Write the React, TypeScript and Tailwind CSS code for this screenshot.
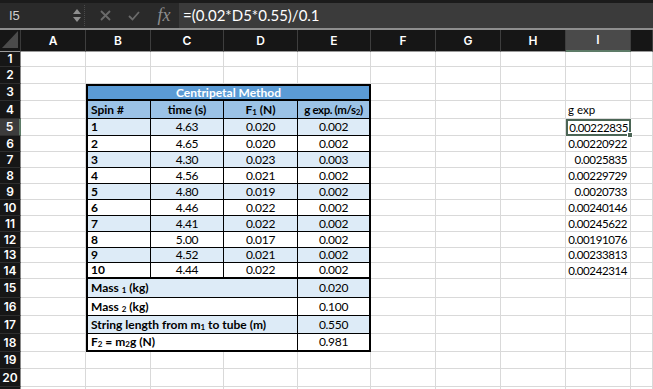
import React from 'react';

const COLS = ['A', 'B', 'C', 'D', 'E', 'F', 'G', 'H', 'I', ''];

const G_EXP = [
  '0.00222835',
  '0.00220922',
  '0.0025835',
  '0.00229729',
  '0.0020733',
  '0.00240146',
  '0.00245622',
  '0.00191076',
  '0.00233813',
  '0.00242314',
];

const SPINS = [
  ['1', '4.63', '0.020', '0.002'],
  ['2', '4.65', '0.020', '0.002'],
  ['3', '4.30', '0.023', '0.003'],
  ['4', '4.56', '0.021', '0.002'],
  ['5', '4.80', '0.019', '0.002'],
  ['6', '4.46', '0.022', '0.002'],
  ['7', '4.41', '0.022', '0.002'],
  ['8', '5.00', '0.017', '0.002'],
  ['9', '4.52', '0.021', '0.002'],
  ['10', '4.44', '0.022', '0.002'],
];

const cellFont = { fontFamily: 'Lato, "Open Sans", sans-serif' };

const FormulaBar: React.FC = () => (
  <div className="flex h-[30px] items-stretch border-t-[3px] border-b-2 border-t-[#1b1b1b] border-b-[#8e8e8e] bg-[#2a2a2a]">
    <div className="flex w-[70px] items-center pl-[9px] text-[13px] text-[#cfcfcf] font-['Liberation_Sans',sans-serif]">
      I5
    </div>
    <div className="flex w-[14px] flex-col items-center justify-center gap-[3px]">
      <svg width="8" height="5" viewBox="0 0 8 5">
        <path d="M4 0 L8 5 L0 5 Z" fill="#8f8f8f" />
      </svg>
      <svg width="8" height="5" viewBox="0 0 8 5">
        <path d="M0 0 L8 0 L4 5 Z" fill="#8f8f8f" />
      </svg>
    </div>
    <div className="my-[2px] w-px border-l border-dotted border-[#4a4a4a]" />
    <div className="flex w-[40px] items-center justify-center">
      <svg width="11" height="11" viewBox="0 0 11 11">
        <path d="M1 1 L10 10 M10 1 L1 10" stroke="#6a6a6a" strokeWidth="1.8" />
      </svg>
    </div>
    <div className="flex w-[18px] items-center justify-center">
      <svg width="12" height="10" viewBox="0 0 12 10">
        <path d="M1 5 L4.5 8.5 L11 1" stroke="#6a6a6a" strokeWidth="1.8" fill="none" />
      </svg>
    </div>
    <div className="flex w-[36px] items-center justify-center pl-[6px] text-[18px] italic text-[#8d8d8d] font-['Liberation_Serif',serif]">
      fx
    </div>
    <div className="flex flex-1 items-center bg-[#3b3b3b] pl-[4px] text-[15px] text-white font-['Lato',sans-serif]">
      =(0.02*D5*0.55)/0.1
    </div>
  </div>
);

const Corner: React.FC = () => (
  <div className="flex items-end justify-end border-r border-b border-r-[#3a3a3a] border-b-[#9a9a9a] bg-[#161616] pr-[2px] pb-[3px]">
    <svg width="16" height="17" viewBox="0 0 16 17">
      <path d="M16 0 L16 17 L0 17 Z" fill="#4b4b4b" />
    </svg>
  </div>
);

const CentripetalTable: React.FC = () => {
  const base = 'flex items-center whitespace-nowrap px-[3px] border-black';
  const num = 'justify-center tracking-[-0.3px]';
  return (
    <div
      className="col-start-3 col-end-7 row-start-4 row-end-20 grid grid-cols-subgrid grid-rows-subgrid border-2 border-black text-[12px] text-black"
      style={cellFont}
    >
      <div className={`${base} col-span-4 justify-center border-b-2 bg-[#5b9bd5] font-bold text-white`}>
        Centripetal Method
      </div>
      <div className={`${base} border-r border-b bg-[#9bc2e6] font-bold`}>Spin #</div>
      <div className={`${base} justify-center border-r border-b bg-[#9bc2e6] font-bold`}>time (s)</div>
      <div className={`${base} justify-center border-r border-b bg-[#9bc2e6] font-bold`}>
        F<sub className="text-[8px]">1</sub>&nbsp;(N)
      </div>
      <div className="flex items-center justify-center overflow-hidden whitespace-nowrap border-b border-black bg-[#9bc2e6] text-[11.5px] font-bold tracking-[-0.4px]">
        g exp. (m/s<sub className="text-[8px]">2</sub>)
      </div>
      {SPINS.map((row, i) => {
        const bg = i % 2 === 0 ? 'bg-[#ddebf7]' : 'bg-white';
        const bottom = i === SPINS.length - 1 ? 'border-b-2' : 'border-b';
        return (
          <React.Fragment key={row[0]}>
            <div className={`${base} ${bg} ${bottom} border-r font-bold`}>{row[0]}</div>
            <div className={`${base} ${bg} ${bottom} ${num} border-r`}>{row[1]}</div>
            <div className={`${base} ${bg} ${bottom} ${num} border-r`}>{row[2]}</div>
            <div className={`${base} ${bg} ${bottom} ${num}`}>{row[3]}</div>
          </React.Fragment>
        );
      })}
      <div className={`${base} col-span-3 border-r border-b bg-[#ddebf7] font-bold`}>
        Mass&nbsp;<sub className="text-[8px]">1</sub>&nbsp;(kg)
      </div>
      <div className={`${base} ${num} border-b bg-[#ddebf7]`}>0.020</div>
      <div className={`${base} col-span-3 border-r border-b bg-white font-bold`}>
        Mass&nbsp;<sub className="text-[8px]">2</sub>&nbsp;(kg)
      </div>
      <div className={`${base} ${num} border-b bg-white`}>0.100</div>
      <div className={`${base} col-span-3 border-r border-b bg-[#ddebf7] font-bold`}>
        String length from m<sub className="text-[8px]">1</sub>&nbsp;to tube (m)
      </div>
      <div className={`${base} ${num} border-b bg-[#ddebf7]`}>0.550</div>
      <div className={`${base} col-span-3 border-r bg-white font-bold`}>
        F<sub className="text-[8px]">2</sub>&nbsp;= m<sub className="text-[8px]">2</sub>g (N)
      </div>
      <div className={`${base} ${num} bg-white`}>0.981</div>
    </div>
  );
};

const SheetCell: React.FC<{ row: number; col: number }> = ({ row, col }) => {
  const isI = col === 8;
  const selected = isI && row === 5;
  let content: React.ReactNode = null;
  if (isI && row === 4) content = <span className="pl-[2px]">g exp</span>;
  if (isI && row >= 5 && row <= 14) content = G_EXP[row - 5];

  if (selected) {
    return (
      <div className="relative flex items-center justify-end border-2 border-[#4b6555] bg-white pr-[1px] text-[11.5px] tracking-[-0.4px] text-black" style={cellFont}>
        {content}
        <div className="absolute right-[-4px] bottom-[-4px] h-[6px] w-[6px] border border-white bg-[#4b6555]" />
      </div>
    );
  }

  return (
    <div
      className={`flex items-center border-r border-b border-[#d9d9d9] bg-white text-[11.5px] text-black ${
        isI && row >= 5 ? 'justify-end pr-[3px] tracking-[-0.4px]' : 'justify-start'
      }`}
      style={cellFont}
    >
      {content}
    </div>
  );
};

const App: React.FC = () => {
  const rows = Array.from({ length: 21 }, (_, i) => i + 1);

  return (
    <div className="h-[389px] w-[653px] overflow-hidden bg-white">
      <FormulaBar />
      <div className="grid h-[359px] grid-cols-[21px_65px_65px_73px_74px_73px_65px_65px_65px_65px_1fr] grid-rows-[22px_15px_17px_17px_18px_17px_16px_16px_16px_16px_16px_16px_16px_15px_16px_19px_18px_18px_18px_17px_18px_20px] overflow-hidden">
        <Corner />
        {COLS.map((c) => (
          <div
            key={`h-${c || 'J'}`}
            className={`flex items-center justify-center border-r border-r-[#3e3e3e] text-[12px] font-semibold text-white font-['Inter',sans-serif] ${
              c === 'I' ? 'border-b-2 border-b-[#5d7b67] bg-[#4a4a4a]' : 'border-b border-b-[#9a9a9a] bg-[#161616]'
            }`}
          >
            {c}
          </div>
        ))}
        {rows.map((r) => (
          <React.Fragment key={`r-${r}`}>
            <div
              className={`flex items-center justify-center border-b border-b-[#2e2e2e] text-[12px] font-semibold text-white font-['Inter',sans-serif] ${
                r === 5 ? 'border-r-2 border-r-[#5d7b67] bg-[#3c3c3c]' : 'border-r border-r-[#8a8a8a] bg-[#161616]'
              }`}
            >
              {r < 21 ? r : null}
            </div>
            {COLS.map((_, ci) => {
              if (ci >= 1 && ci <= 4 && r >= 3 && r <= 18) return null;
              return <SheetCell key={`c-${r}-${ci}`} row={r} col={ci} />;
            })}
          </React.Fragment>
        ))}
        <CentripetalTable />
      </div>
    </div>
  );
};

export default App;
